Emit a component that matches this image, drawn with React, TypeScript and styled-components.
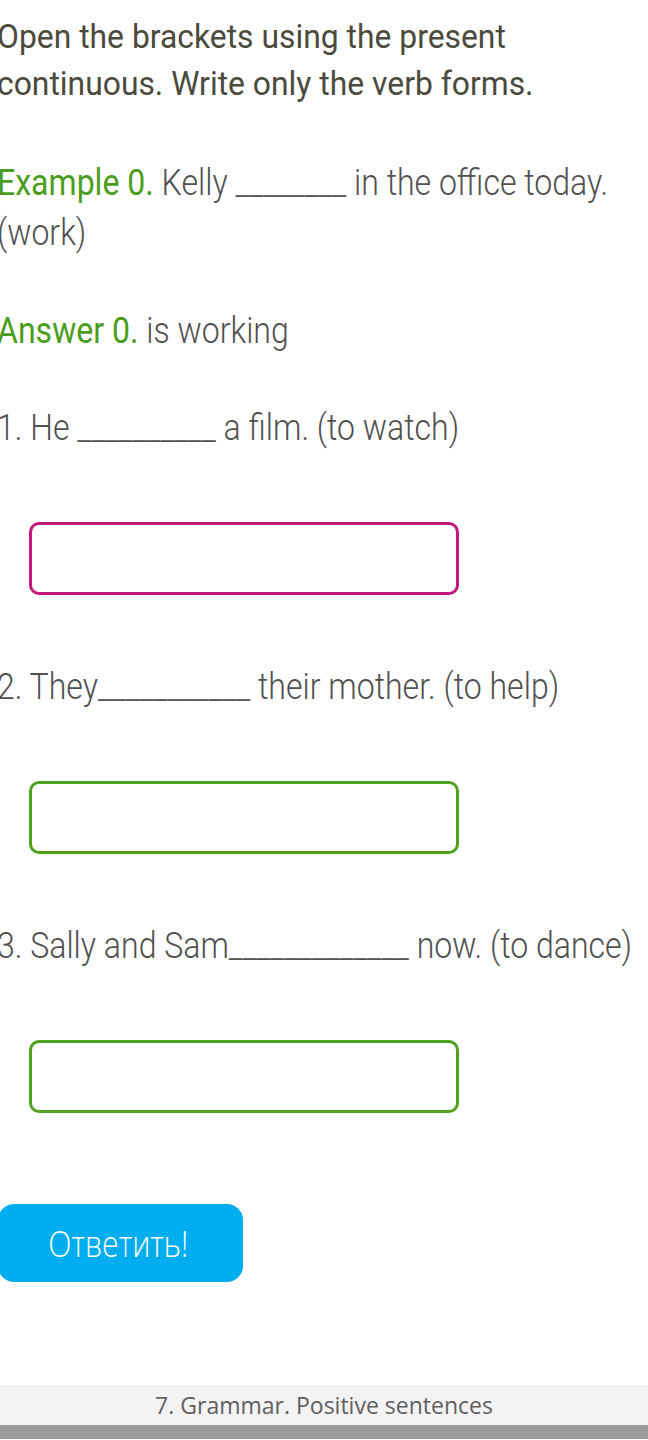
import React from 'react';
import styled, { createGlobalStyle } from 'styled-components';

const GlobalStyle = createGlobalStyle`
	html, body {
		margin: 0;
		padding: 0;
		background: #ffffff;
		overflow-x: hidden;
	}
`;

const Page = styled.div`
	width: 648px;
	min-height: 1440px;
	display: flex;
	flex-direction: column;
	overflow: hidden;
`;

const Content = styled.main`
	display: flex;
	flex-direction: column;
	align-items: flex-start;
	margin-left: -3px;
	padding-top: 13px;
`;

// Roboto narrowed a little to the proportions of the condensed face in the shot
const Condensed = styled.p<{ $gap: number }>`
	margin: ${(p) => p.$gap}px 0 0;
	width: max-content;
	transform-origin: 0 0;
	font-family: Roboto, "Liberation Sans", sans-serif;
	white-space: nowrap;
`;

const Heading = styled(Condensed)`
	font-size: 33px;
	line-height: 47px;
	font-weight: 400;
	color: #4a4a3d;
	transform: scaleX(0.965);
`;

const Sentence = styled(Condensed)`
	font-size: 36px;
	line-height: 50px;
	font-weight: 300;
	color: #505050;
	transform: scaleX(0.89);
`;

const Label = styled.span`
	font-weight: 400;
	color: #4b9e1d;
`;

const AnswerBox = styled.input<{ $tone: 'wrong' | 'idle'; $gap: number }>`
	box-sizing: border-box;
	margin: ${(p) => p.$gap}px 0 0 32px;
	width: 430px;
	height: 73px;
	border: 3px solid ${(p) => (p.$tone === 'wrong' ? '#c2187b' : '#4fa11e')};
	border-radius: 10px;
	background: #ffffff;
	outline: none;
	font-family: Roboto, sans-serif;
	font-size: 28px;
	padding: 0 14px;
`;

const SubmitButton = styled.button`
	margin: 91px 0 0 1px;
	width: 245px;
	height: 78px;
	border: none;
	border-radius: 16px;
	background: #00adee;
	color: #ffffff;
	cursor: pointer;
	padding: 0;
	display: flex;
	align-items: center;
	justify-content: center;
`;

const ButtonText = styled.span`
	display: inline-block;
	font-family: "Open Sans", Roboto, sans-serif;
	font-weight: 300;
	font-size: 36px;
	transform: scaleX(0.84);
	margin-left: -4px;
`;

const Footer = styled.footer`
	margin-top: 103px;
	display: flex;
	flex-direction: column;
`;

const FooterTitle = styled.div`
	height: 40px;
	background: #f3f3f3;
	display: flex;
	align-items: center;
	justify-content: center;
	font-family: "Open Sans", sans-serif;
	font-size: 23px;
	color: #606060;
`;

const FooterBar = styled.div`
	height: 14px;
	background: #9b9b9b;
`;

type Question = {
	text: string;
	tone: 'wrong' | 'idle';
};

const questions: Question[] = [
	{ text: '1. He __________ a film. (to watch)', tone: 'wrong' },
	{ text: '2. They___________ their mother. (to help)', tone: 'idle' },
	{ text: '3. Sally and Sam_____________ now. (to dance)', tone: 'idle' },
];

export default function App() {
	return (
		<Page>
			<GlobalStyle />
			<Content>
				<Heading $gap={0}>
					Open the brackets using the present
					<br />
					continuous. Write only the verb forms.
				</Heading>
				<Sentence $gap={51}>
					<Label>Example 0.</Label> Kelly ________ in the office today.
					<br />
					(work)
				</Sentence>
				<Sentence $gap={48}>
					<Label>Answer 0.</Label> is working
				</Sentence>
				{questions.map((q, i) => (
					<React.Fragment key={i}>
						<Sentence $gap={i === 0 ? 47 : 67}>{q.text}</Sentence>
						<AnswerBox $tone={q.tone} $gap={69} type="text" />
					</React.Fragment>
				))}
				<SubmitButton>
					<ButtonText>Ответить!</ButtonText>
				</SubmitButton>
			</Content>
			<Footer>
				<FooterTitle>7. Grammar. Positive sentences</FooterTitle>
				<FooterBar />
			</Footer>
		</Page>
	);
}
